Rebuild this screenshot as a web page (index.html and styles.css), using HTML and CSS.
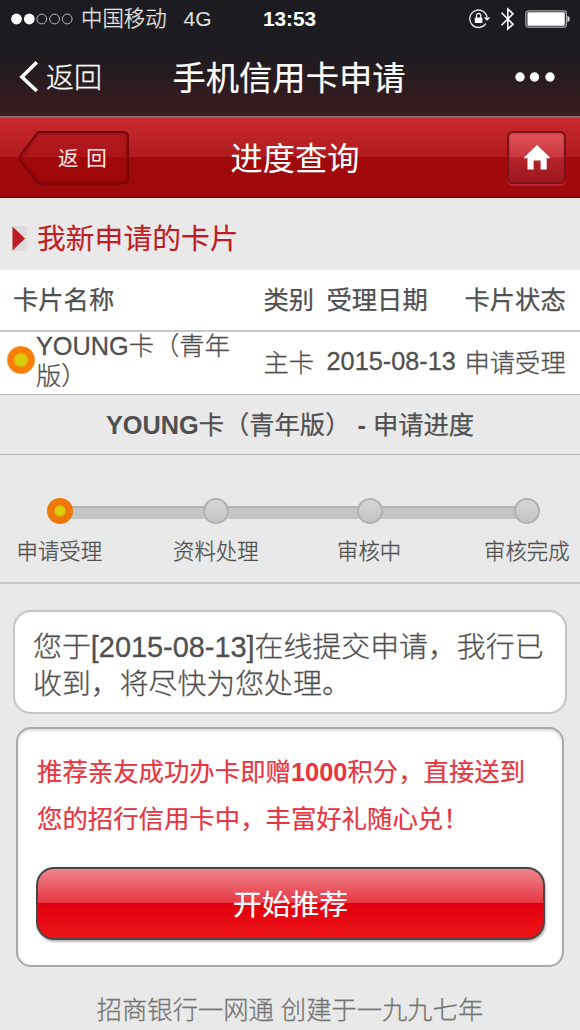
FILE: index.html
```html
<!DOCTYPE html>
<html lang="zh-CN">
<head>
<meta charset="utf-8">
<title>手机信用卡申请</title>
<link rel="stylesheet" href="styles.css">
</head>
<body>
<div class="top">
  <div class="status">
    <div class="status-left">
      <svg class="signal" width="62" height="12" viewBox="0 0 62 12">
        <circle cx="5.5" cy="6" r="5.4" fill="#fff"/><circle cx="18.3" cy="6" r="5.4" fill="#fff"/>
        <g fill="none" stroke="#b9b9bb" stroke-width="1"><circle cx="30.8" cy="6" r="4.9"/><circle cx="43.6" cy="6" r="4.9"/><circle cx="56.2" cy="6" r="4.9"/></g>
      </svg>
      <span class="carrier">中国移动</span><span class="net">4G</span>
    </div>
    <span class="time">13:53</span>
    <div class="status-right">
      <svg width="22" height="20" viewBox="0 0 22 20">
        <path d="M16.8 14.5A8.7 8.7 0 1 1 18.1 8.4" fill="none" stroke="#ddd" stroke-width="1.4"/>
        <path d="M14.8 8.4h6.6L18 11.8z" fill="#fff"/>
        <rect x="5.8" y="8.4" width="7.6" height="5.6" rx=".6" fill="#fff"/>
        <path d="M7.5 8.8V6.6a2.1 2.3 0 0 1 4.2 0v2.2" fill="none" stroke="#fff" stroke-width="1.2"/>
      </svg>
      <svg class="bt" width="16" height="24" viewBox="0 0 16 24"><path d="M1.5 5.8L13 17.2 7.8 22V2L13 6.8 1.5 18.2" fill="none" stroke="#fff" stroke-width="1.6"/></svg>
      <svg class="battery" width="46" height="18" viewBox="0 0 46 18">
        <rect x=".8" y=".8" width="40.6" height="16.4" rx="2.8" fill="none" stroke="#a9a9aa" stroke-width="1.2"/>
        <rect x="2.4" y="2.2" width="37.4" height="13.6" rx="1.2" fill="#fff"/>
        <path d="M42.4 5.8q2.4 1 2.4 3.2t-2.4 3.2z" fill="#ddd"/>
      </svg>
    </div>
  </div>
  <div class="nav">
    <div class="nav-back">
      <svg width="20" height="34" viewBox="0 0 20 34"><path d="M17.8 2.2L2.9 17l14.9 14" fill="none" stroke="#fff" stroke-width="3.6"/></svg>
      <span>返回</span>
    </div>
    <span class="nav-title">手机信用卡申请</span>
    <svg class="more" width="40" height="10" viewBox="0 0 40 10"><g fill="#fff"><circle cx="5" cy="5" r="4.7"/><circle cx="19.5" cy="5" r="4.7"/><circle cx="35" cy="5" r="4.7"/></g></svg>
  </div>
</div>
<div class="header">
  <div class="back-btn">
    <svg class="back-shape" width="112" height="56" viewBox="0 0 112 56">
      <path d="M20 2H105Q110 2 110 7V48.500Q110 53.500 105 53.500H20L2.500 31Q.8 28 2.500 25Z" fill="#a00a0e" fill-opacity=".35" stroke="#780308" stroke-width="2"/>
      <path d="M21 4H104.500Q108 4 108 7.500V48Q108 51.500 104.500 51.500H21L4.500 30Q3.500 28 4.500 26Z" fill="none" stroke="#7c0509" stroke-opacity=".3" stroke-width="2"/>
    </svg>
    <span>返 回</span>
  </div>
  <span class="header-title">进度查询</span>
  <div class="home">
    <svg width="26" height="25" viewBox="0 0 26 25"><path d="M13 0L26 12.600V13.200H22.700V24.600H16.600V15.500H9.600V24.600H3.500V13.200H0V12.600Z" fill="#fff"/></svg>
  </div>
</div>
<div class="section">
  <svg width="15" height="25" viewBox="0 0 15 25"><path d="M0 0H15V25H0z" fill="#dcdcdc"/><path d="M.5 .5V24.500L13 12.500z" fill="#be1e25"/></svg>
  <span>我新申请的卡片</span>
</div>
<div class="row row-head"><span class="name-head">卡片名称</span><span>类别</span><span>受理日期</span><span>卡片状态</span></div>
<div class="row row-item">
  <div class="name"><i class="dot"></i><span>YOUNG卡（青年版）</span></div>
  <span class="cell">主卡</span><span class="cell">2015-08-13</span><span class="cell">申请受理</span>
</div>
<div class="subtitle"><b>YOUNG</b>卡（青年版） <b>-</b> 申请进度</div>
<div class="steps">
  <div class="step active"><i></i><span>申请受理</span></div>
  <div class="step"><i></i><span>资料处理</span></div>
  <div class="step"><i></i><span>审核中</span></div>
  <div class="step"><i></i><span>审核完成</span></div>
</div>
<div class="notice">您于[2015-08-13]在线提交申请，我行已<br>收到，将尽快为您处理。</div>
<div class="promo">
  <div class="promo-text">推荐亲友成功办卡即赠<b>1000</b>积分，直接送到<br>您的招行信用卡中，丰富好礼随心兑！</div>
  <div class="cta">开始推荐</div>
</div>
<div class="footer">招商银行一网通 创建于一九九七年</div>
</body>
</html>
```
FILE: styles.css
```css
* { box-sizing: border-box; }
html { overflow: hidden; }
body {
  margin: 0;
  width: 580px;
  height: 1030px;
  overflow: hidden;
  background: #e9e9e9;
  color: #505050;
  font-family: "Liberation Sans", "Noto Sans CJK SC", sans-serif;
  font-size: 25.3px;
  white-space: nowrap;
}
svg { display: block; flex: none; }
.top {
  height: 118px;
  color: #fff;
  background: linear-gradient(#1c1c20 0%, #1d1b1f 45%, #281c20 68%, #3d1b1e 100%);
  border-bottom: 2px solid #7e7071;
}
.status {
  height: 38px;
  display: grid;
  grid-template-columns: 1fr auto 1fr;
  align-items: center;
  padding: 0 11px 0 11px;
}
.status-left, .status-right { display: flex; align-items: center; }
.status-right { justify-content: flex-end; }
.carrier { font-size: 21.4px; margin-left: 8px; line-height: 38px; color: #e4e4e4; font-weight: 300; -webkit-text-stroke: .3px; }
.net { font-size: 21px; margin-left: 17px; color: #e4e4e4; }
.time { font-size: 20.8px; font-weight: bold; margin-left: -1px; }
.bt { margin-left: 9px; }
.battery { margin-left: 9px; margin-right: -2px; }
.nav {
  height: 78px;
  display: grid;
  grid-template-columns: 1fr auto 1fr;
  align-items: center;
  padding: 0 25px 0 19px;
}
.nav-back { display: flex; align-items: center; gap: 7px; padding-bottom: 1px; font-size: 28px; font-weight: 300; -webkit-text-stroke: .3px; }
.nav-back span { padding-bottom: 2px; }
.nav-title { padding: 0 0 4px 3px; margin-right: -1px; font-size: 33.3px; -webkit-text-stroke: .2px; }
.more { justify-self: end; }
.header {
  height: 80px;
  display: grid;
  grid-template-columns: 1fr auto 1fr;
  align-items: center;
  padding: 0 14px 0 18px;
  color: #fff;
  background: linear-gradient(#c82a2e 0, #b01b20 39px, #a00a0c 39px, #a0090b 100%);
  border-bottom: 1px solid #2c0507;
}
.back-btn { display: grid; width: 112px; height: 56px; align-items: center; }
.back-btn > * { grid-area: 1 / 1; }
.back-btn span { padding: 0 0 2px 40px; font-size: 20.5px; word-spacing: 2px; color: #fde9e9; }
.header-title { padding: 0 0 4px 6px; font-size: 32.3px; }
.home {
  justify-self: end;
  display: flex;
  justify-content: center;
  align-items: center;
  width: 59px;
  height: 53px;
  border: 2px solid #7e1118;
  border-radius: 6px;
  background: linear-gradient(#de5458 0%, #c9393f 48%, #b3242a 51%, #9d161c 100%);
  box-shadow: inset 0 0 2px #a0252a, 0 2px 1px #b8272a;
}
.section {
  height: 72px;
  display: flex;
  align-items: center;
  gap: 10px;
  padding: 9px 0 0 12px;
  font-size: 28.8px;
  color: #be1e25;
  line-height: 60px;
  -webkit-text-stroke: .15px;
}
.row {
  display: grid;
  grid-template-columns: 263.500px 63px 138px 1fr;
  align-items: center;
  background: #fff;
}
.row-head { height: 62px; padding-bottom: 4px; border-bottom: 2px solid #c8c8c8; -webkit-text-stroke: .25px; }
.name-head { padding-left: 13px; }
.row-item { height: 63px; grid-template-rows: 55px; border-bottom: 1px solid #bdbdbd; font-weight: 300; -webkit-text-stroke: .3px; }
.name { display: flex; align-items: center; gap: 1px; padding-left: 7px; line-height: 30.500px; }
.name span { width: 204px; padding-top: 3px; white-space: normal; word-break: break-all; }
.cell { padding-top: 3px; }
.dot {
  flex: none;
  width: 28px;
  height: 28px;
  border-radius: 50%;
  background: radial-gradient(circle, #d9cd0d 0 5px, #dfb30b 6.500px, #f97c07 8px 12.500px, #fba24b 14px);
}
.subtitle {
  height: 60px;
  line-height: 60px;
  text-align: center;
  border-bottom: 1px solid #b8b8b8;
  -webkit-text-stroke: .25px;
}
.subtitle b, .promo-text b { -webkit-text-stroke: 0; }
.steps {
  position: relative;
  height: 129px;
  display: grid;
  grid-template-columns: 156.500px 164px 147px 86px;
  justify-items: start;
  padding: 43px 0 0 16.500px;
  border-bottom: 2px solid #c5c5c5;
  font-size: 21.400px;
}
.steps::before {
  content: "";
  position: absolute;
  left: 62px;
  top: 51px;
  width: 462px;
  height: 11px;
  background: #c5c5c5;
  border-top: 2px solid #b4b4b4;
}
.step { position: relative; display: flex; flex-direction: column; align-items: center; }
.step i {
  width: 26px;
  height: 26px;
  margin-left: 1px;
  border-radius: 50%;
  border: 2px solid #b2b2b2;
  background: linear-gradient(#d6d6d6, #c4c4c4);
}
.step.active i { border: 0; background: radial-gradient(circle, #d8d50c 0 3px, #e4b60c 5px, #ee770a 6.500px); }
.step span { line-height: 32px; margin-top: 12px; font-weight: 300; -webkit-text-stroke: .3px; }
.notice {
  margin: 26px 13px 0;
  height: 104px;
  padding: 17px 0 0 18px;
  border: 2px solid #c5c5c5;
  border-radius: 18px;
  background: #fff;
  font-size: 28.900px;
  line-height: 36.500px;
  font-weight: 300;
  -webkit-text-stroke: .3px;
}
.promo {
  margin: 13px 16px 0 16px;
  height: 240px;
  padding: 20px 18px 0 19px;
  border: 2px solid #a9a9a9;
  border-radius: 15px;
  background: #fff;
  box-shadow: inset 0 2px 3px #ddd;
}
.promo-text { color: #e73541; font-size: 25.400px; line-height: 47px; -webkit-text-stroke: .2px; }
.cta {
  height: 73px;
  margin: 24px -1px 0;
  line-height: 72px;
  text-align: center;
  color: #fff;
  font-size: 28.800px;
  -webkit-text-stroke: .2px;
  border: 2px solid #484848;
  border-radius: 18px;
  background: linear-gradient(#f0858c 0%, #e53541 50%, #e0000f 50%, #ed1518 100%);
  box-shadow: 1px 2px 2px #bbb;
}
.footer { margin-top: 23px; line-height: 40px; text-align: center; color: #757575; font-weight: 300; -webkit-text-stroke: .3px; }
```
